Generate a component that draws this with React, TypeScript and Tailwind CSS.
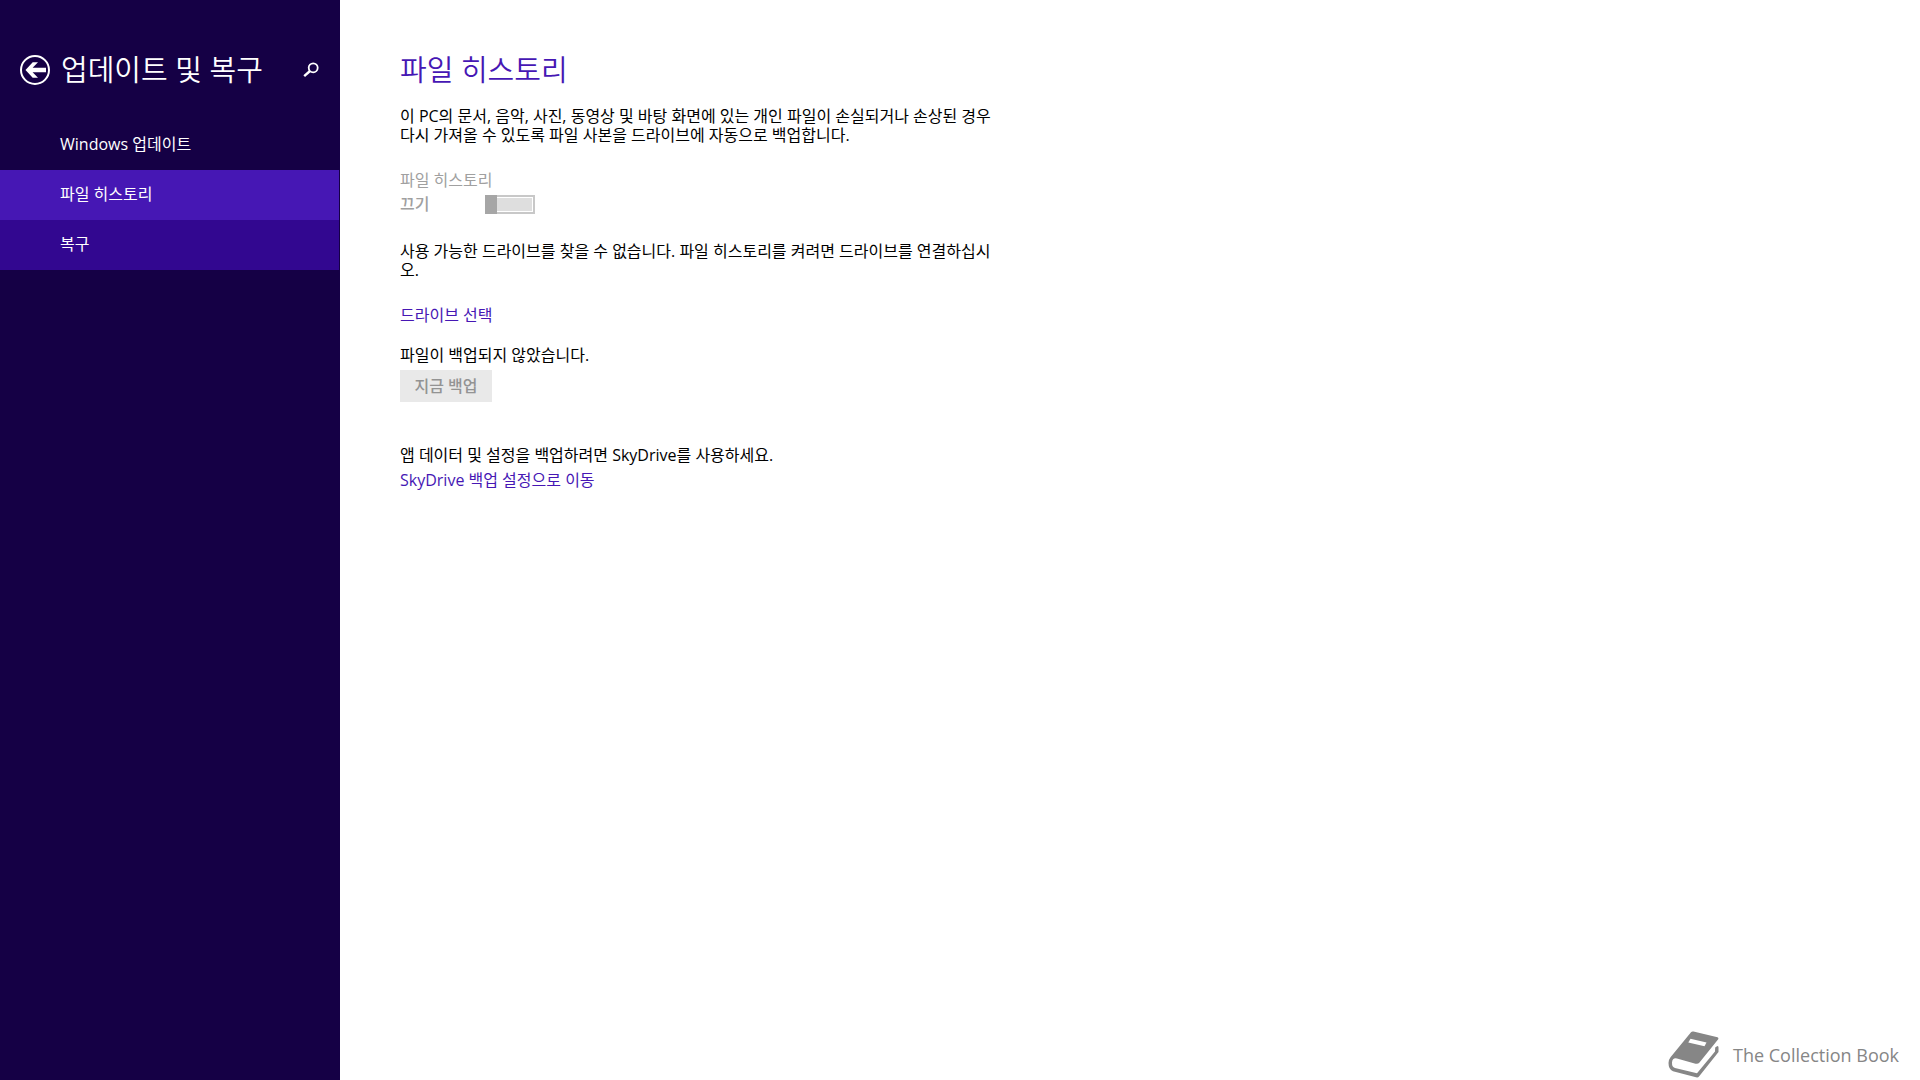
import { useState } from 'react';

type NavItem = {
  id: string;
  label: string;
  className: string;
};

const navItems: NavItem[] = [
  { id: 'update', label: 'Windows 업데이트', className: 'bg-[#150045]' },
  { id: 'history', label: '파일 히스토리', className: 'bg-[#4617b4]' },
  { id: 'recovery', label: '복구', className: 'bg-[#320790]' },
];

function BackIcon() {
  return (
    <svg viewBox="0 0 30 30" className="size-[30px]" fill="none" aria-hidden="true">
      <circle cx="15" cy="15" r="14" stroke="#fff" strokeWidth="2" />
      <path d="M5.5 15 12.700 7.200H18L12.600 12.800H26v4.400H12.600l5.400 5.600H12.700z" fill="#fff" />
    </svg>
  );
}

function SearchIcon() {
  return (
    <svg viewBox="0 0 16 16" className="size-4" fill="none" stroke="#fff" aria-hidden="true">
      <circle cx="10.200" cy="5.800" r="4.500" strokeWidth="1.800" />
      <path d="M7 9 1.200 14.200" strokeWidth="2.400" />
    </svg>
  );
}

function BookIcon() {
  return (
    <svg viewBox="0 0 51 47" className="h-[47px] w-[51px]" aria-hidden="true">
      <path
        d="M23 1.200Q24 .2 25.500 .6L49.500 6.300Q51 7 50.200 8.300L31.500 31.500Q30 33.300 27.500 32.700L9 27.500Q4.500 26.500 4 31.500Q3.800 36 7 37L29 42.300L47 20.500L47.200 16.500Q50.500 13.500 50.500 16.500V21L31 45.500Q30 46.800 28 46.300L5 40.200Q.5 38.500 .5 32Q.6 28.500 2.500 26.200z"
        fill="#868686"
      />
      <path d="M22.500 7.800 38.500 11.500 36.500 15.200 20.300 11.400z" fill="#fff" />
    </svg>
  );
}

function Sidebar({ current, onSelect }: { current: string; onSelect: (id: string) => void }) {
  return (
    <aside className="w-[340px] shrink-0 bg-[#150045] pr-px text-white">
      <header className="flex h-[120px] items-start pt-[51px] pl-5">
        <button type="button" aria-label="뒤로" className="mt-1">
          <BackIcon />
        </button>
        <h1 className="ml-[11px] text-[29px] leading-[38px] font-[350] whitespace-nowrap">업데이트 및 복구</h1>
        <button type="button" aria-label="검색" className="mt-[11px] mr-5 ml-auto">
          <SearchIcon />
        </button>
      </header>
      <nav>
        {navItems.map((item) => (
          <button
            key={item.id}
            type="button"
            aria-current={current === item.id ? 'page' : undefined}
            onClick={() => onSelect(item.id)}
            className={`flex h-[50px] w-full items-center pb-0.5 pl-[60px] text-left ${item.className}`}
          >
            {item.label}
          </button>
        ))}
      </nav>
    </aside>
  );
}

function FileHistory() {
  return (
    <main className="flex-1 pt-[51px] pr-6 pl-[60px]">
      <h2 className="text-[29px] leading-[38px] font-[350] text-[#4617b4]">파일 히스토리</h2>

      <p className="mt-[18px]">
        이 PC의 문서, 음악, 사진, 동영상 및 바탕 화면에 있는 개인 파일이 손실되거나 손상된 경우
        <br />
        다시 가져올 수 있도록 파일 사본을 드라이브에 자동으로 백업합니다.
      </p>

      <div className="mt-[26px] text-[#a0a0a0]">
        <label htmlFor="file-history">파일 히스토리</label>
        <div className="mt-[5px] flex items-center">
          <span className="w-[85px] font-medium">끄기</span>
          <input
            id="file-history"
            type="checkbox"
            role="switch"
            disabled
            className="relative h-[19px] w-[50px] appearance-none border-2 border-[#c8c8c8] bg-[#dedede] shadow-[inset_0_0_0_1px_#fff] before:absolute before:-top-0.5 before:-left-0.5 before:h-[19px] before:w-3 before:bg-[#a6a6a6]"
          />
        </div>
      </div>

      <p className="mt-7">
        사용 가능한 드라이브를 찾을 수 없습니다. 파일 히스토리를 켜려면 드라이브를 연결하십시
        <br />
        오.
      </p>

      <a href="#drive" className="mt-[26px] block w-fit text-[#4617b4]">
        드라이브 선택
      </a>

      <p className="mt-[21px]">파일이 백업되지 않았습니다.</p>
      <button type="button" disabled className="mt-[5px] h-8 w-[92px] bg-[#e9e9e9] font-medium text-[#939393]">
        지금 백업
      </button>

      <p className="mt-11">앱 데이터 및 설정을 백업하려면 SkyDrive를 사용하세요.</p>
      <a href="#skydrive" className="mt-1.5 block w-fit text-[#4617b4]">
        SkyDrive 백업 설정으로 이동
      </a>
    </main>
  );
}

export default function App() {
  const [current, setCurrent] = useState('history');

  return (
    <div
      lang="ko"
      className="flex min-h-screen bg-white font-['Open_Sans','Noto_Sans_CJK_KR',sans-serif] text-[16px] leading-[19px] text-black"
    >
      <Sidebar current={current} onSelect={setCurrent} />
      <div className="flex flex-1 flex-col">
        <FileHistory />
        <footer className="flex items-center justify-end gap-3.5 pr-[21px] pb-0.5 text-[18px] leading-6 text-[#868686]">
          <BookIcon />
          <span>The Collection Book</span>
        </footer>
      </div>
    </div>
  );
}
